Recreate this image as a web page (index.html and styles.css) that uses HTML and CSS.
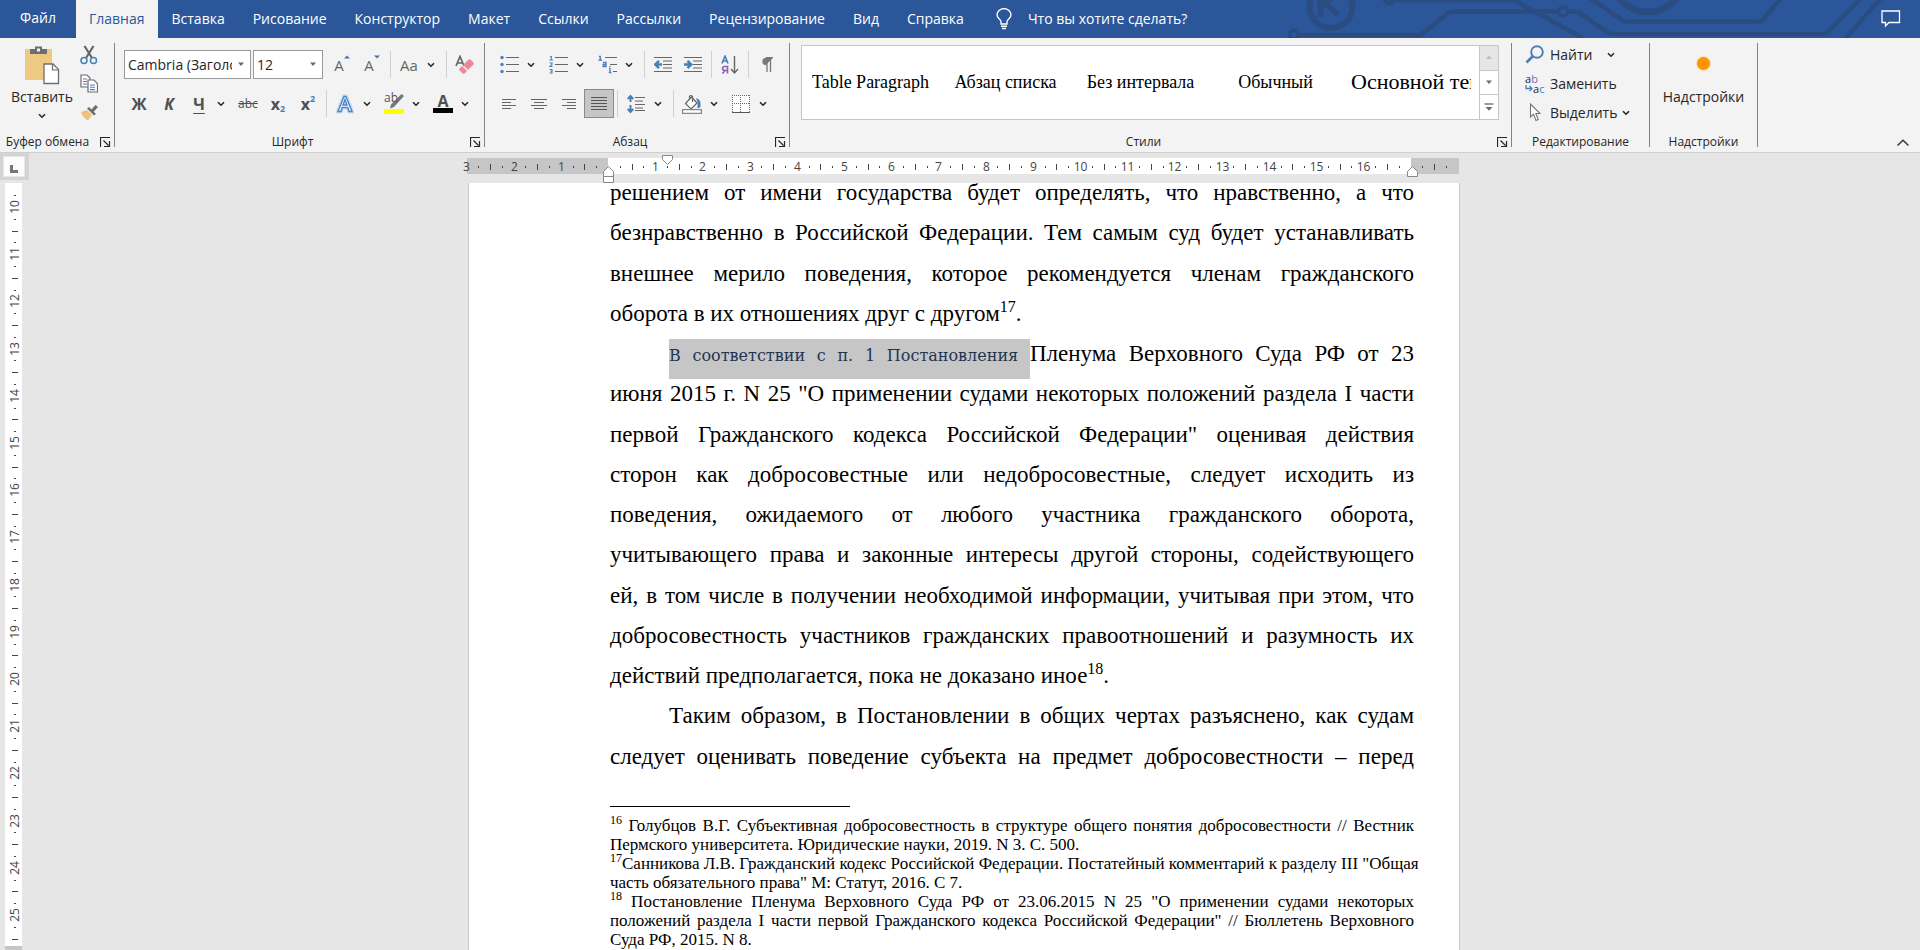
FILE: index.html
```html
<!DOCTYPE html>
<html lang="ru">
<head>
<meta charset="utf-8">
<title>Документ</title>
<link rel="stylesheet" href="styles.css">
</head>
<body>
<svg class="defs" width="0" height="0" aria-hidden="true">
  <symbol id="chev" viewBox="0 0 8 6"><path d="M1 1.2l3 3 3-3" fill="none" stroke="#262626" stroke-width="1.6"/></symbol>
  <symbol id="tri" viewBox="0 0 8 5"><path d="M1 .5h6L4 4z" fill="#6a6a6a"/></symbol>
  <symbol id="launch" viewBox="0 0 11 11"><path d="M.5 10V.5H10M3.5 3.5l5 5M9.5 4v5.5H4" fill="none" stroke="#262626" stroke-width="1.2"/></symbol>
</svg>

<header class="tabs">
  <svg class="circuit" viewBox="1280 0 640 38" width="640" height="38" fill="none" stroke="#2a4c80" stroke-width="4.5" aria-hidden="true">
    <circle cx="1331" cy="6.500" r="21.500" stroke-width="6"/>
    <path d="M1320.500 0v17M1324 2l14 13M1318 0h14" stroke-width="6"/>
    <circle cx="1294" cy="34.500" r="4.500" stroke-width="4"/>
    <path d="M1299 35h122l27-22q3-1.500 6-1.500h103M1569 11.500h6q4 .5 7 3l24 17q3 2.500 6 2.500h212l3-1L1861-2"/>
    <circle cx="1563" cy="11.500" r="4.500" stroke-width="3.500"/>
    <circle cx="1389" cy="-.5" r="4"/>
    <path d="M1394 0h118q4 .5 7 3l64 35M1590-2l32 22q2 1.500 5 1.500h132l4-1.500 18-22M1845 39l36-41"/>
    <circle cx="1648" cy="-24.500" r="36.500" stroke-width="7"/>
  </svg>
  <nav class="tab-list">
    <button class="tab file">Файл</button>
    <button class="tab active">Главная</button>
    <button class="tab">Вставка</button>
    <button class="tab">Рисование</button>
    <button class="tab">Конструктор</button>
    <button class="tab">Макет</button>
    <button class="tab">Ссылки</button>
    <button class="tab">Рассылки</button>
    <button class="tab">Рецензирование</button>
    <button class="tab">Вид</button>
    <button class="tab">Справка</button>
  </nav>
  <button class="tell-me">
    <svg width="16" height="22" viewBox="0 0 16 22" fill="none" stroke="#fff" stroke-width="1.400"><path d="M5 16v-2.500C5 11.500 1 10.500 1 6.800a6.800 6 0 0 1 14 0c0 3.700-4 4.700-4 6.700V16zM5 18.300h6M6 20.500h4"/></svg>
    <span>Что вы хотите сделать?</span>
  </button>
  <button class="comment" aria-label="Примечания">
    <svg width="20" height="18" viewBox="0 0 20 18" fill="none" stroke="#fff" stroke-width="1.300"><path d="M1 1h17.500v11.500H8L4.500 16v-3.500H1z"/></svg>
  </button>
</header>

<section class="ribbon">
  <div class="group g-clip">
    <div class="clip-body">
      <button class="paste">
        <svg width="36" height="40" viewBox="0 0 36 40"><path d="M1 4h27v31H1z" fill="#eec983"/><path d="M6 9V4h5V1.500h7V4h5v5z" fill="#6d6d6d"/><path d="M13 3.500h3v3h-3z" fill="#f3f3f3"/><path d="M20 19h9l5.500 5.500V38.500H20z" fill="#fff" stroke="#6d6d6d" stroke-width="1.300"/><path d="M28.500 19v6h6" fill="none" stroke="#6d6d6d" stroke-width="1.200"/></svg>
        <span>Вставить</span>
        <svg width="8" height="6"><use href="#chev"/></svg>
      </button>
      <div class="clip-side">
        <button class="ico" aria-label="Вырезать"><svg width="18" height="20" viewBox="0 0 18 20" fill="none"><path d="M4.500 1l7.500 12M13.500 1L6 13" stroke="#666" stroke-width="2.200"/><circle cx="4" cy="15.500" r="3" stroke="#4a7ebb" stroke-width="1.500"/><circle cx="13.500" cy="15.500" r="3" stroke="#4a7ebb" stroke-width="1.500"/></svg></button>
        <button class="ico" aria-label="Копировать"><svg width="18" height="19" viewBox="0 0 18 19"><g fill="#fff" stroke="#6d6d6d" stroke-width="1.200"><path d="M1 1h6l3 3v9H1z"/><path d="M8 6h6l3.500 3.500V18H8z"/></g><path d="M3 5h4M3 7.500h4M3 10h4M10 11h5M10 13.300h5M10 15.600h5" stroke="#4a7ebb" stroke-width="1.100"/></svg></button>
        <button class="ico" aria-label="Формат по образцу"><svg width="18" height="17" viewBox="0 0 18 17"><path d="M1 8l6-2 5 5-4 5.500q-2-1-2.500-2-1 .5-1.500-1.500-2-1-3-5z" fill="#eec27a"/><path d="M7 4.500l2-1.500 7 7-2 1.500z" fill="#6d6d6d"/><path d="M11 6l4.500-5L18 3l-4.500 5z" fill="#6d6d6d"/></svg></button>
      </div>
    </div>
    <div class="caption"><span>Буфер обмена</span><button class="launch" aria-label="Буфер обмена: параметры"><svg width="11" height="11"><use href="#launch"/></svg></button></div>
  </div>

  <div class="group g-font">
    <div class="rows">
      <div class="row">
        <div class="combo font-name"><input type="text" aria-label="Шрифт" value="Cambria (Заголовки)"><svg width="8" height="5"><use href="#tri"/></svg></div>
        <div class="combo font-size"><input type="text" aria-label="Размер шрифта" value="12"><svg width="8" height="5"><use href="#tri"/></svg></div>
        <button class="btn glyph up">A<svg width="6" height="4" viewBox="0 0 6 4"><path d="M0 3.500L3 .5l3 3z" fill="#4472b0"/></svg></button>
        <button class="btn glyph up">A<svg width="6" height="4" viewBox="0 0 6 4"><path d="M0 .5h6l-3 3z" fill="#4472b0"/></svg></button>
        <i class="sep"></i>
        <div class="split"><button class="btn glyph">Aa</button><button class="chev" aria-label="Регистр"><svg width="8" height="6"><use href="#chev"/></svg></button></div>
        <i class="sep"></i>
        <button class="btn" aria-label="Удалить форматирование"><svg width="20" height="20" viewBox="0 0 20 20"><path d="M1 11L5 1.500 9 11M2.500 8h5" fill="none" stroke="#666" stroke-width="1.700"/><path d="M13.500 4.500q1-.6 2 0l3 3q.6 1 0 2L13 15 8 10z" fill="#e88a9a"/><path d="M7 11l5 5-2.500 2.500q-1 .6-2 0l-3-3q-.6-1 0-2z" fill="#e88a9a"/></svg></button>
      </div>
      <div class="row">
        <button class="btn glyph b">Ж</button>
        <button class="btn glyph b it">К</button>
        <div class="split"><button class="btn glyph b un">Ч</button><button class="chev" aria-label="Подчёркивание"><svg width="8" height="6"><use href="#chev"/></svg></button></div>
        <button class="btn glyph st">abc</button>
        <button class="btn glyph b">x<sub>2</sub></button>
        <button class="btn glyph b">x<sup>2</sup></button>
        <i class="sep"></i>
        <div class="split"><button class="btn" aria-label="Текстовые эффекты"><svg width="18" height="20" viewBox="0 0 18 20"><path d="M2 17.500L8 2.500h2l6 15h-3L11.800 13.500H6.200L5 17.500zM7 11h4L9 5.500z" fill="#fff" stroke="#c3dcf3" stroke-width="4"/><path d="M2 17.500L8 2.500h2l6 15h-3L11.800 13.500H6.200L5 17.500zM7 11h4L9 5.500z" fill="#fff" stroke="#4a84c9" stroke-width="1.400"/></svg></button><button class="chev" aria-label="Эффекты"><svg width="8" height="6"><use href="#chev"/></svg></button></div>
        <div class="split"><button class="btn mark"><span>ab</span><svg width="20" height="20" viewBox="0 0 20 20"><path d="M17.500 0L20 2l-10 11-4 1.500 1-4z" fill="#777"/><path d="M0 15h20v5H0z" fill="#ff0"/></svg></button><button class="chev" aria-label="Цвет выделения"><svg width="8" height="6"><use href="#chev"/></svg></button></div>
        <div class="split"><button class="btn glyph b color">A</button><button class="chev" aria-label="Цвет текста"><svg width="8" height="6"><use href="#chev"/></svg></button></div>
      </div>
    </div>
    <div class="caption"><span>Шрифт</span><button class="launch" aria-label="Шрифт: параметры"><svg width="11" height="11"><use href="#launch"/></svg></button></div>
  </div>

  <div class="group g-para">
    <div class="rows">
      <div class="row">
        <div class="split"><button class="btn" aria-label="Маркеры"><svg width="19" height="19" viewBox="0 0 19 19"><g fill="#4a7ebb"><circle cx="2" cy="2.500" r="1.700"/><circle cx="2" cy="9.500" r="1.700"/><circle cx="2" cy="16.500" r="1.700"/></g><path d="M6 2.500h13M6 9.500h13M6 16.500h13" stroke="#666"/></svg></button><button class="chev" aria-label="Маркеры: список"><svg width="8" height="6"><use href="#chev"/></svg></button></div>
        <div class="split"><button class="btn" aria-label="Нумерация"><svg width="19" height="19" viewBox="0 0 19 19"><path d="M1 1.500h1.300v3.500M.5 5h3.500M.5 8h2.500v1.500L.8 11.500H3.500M.5 14.500H3V18H.5M1.500 16.200H3" fill="none" stroke="#4a7ebb" stroke-width="1.100"/><path d="M6 2.500h13M6 9.500h13M6 16.500h13" stroke="#666"/></svg></button><button class="chev" aria-label="Нумерация: список"><svg width="8" height="6"><use href="#chev"/></svg></button></div>
        <div class="split"><button class="btn" aria-label="Многоуровневый список"><svg width="19" height="19" viewBox="0 0 19 19"><path d="M1 1.500h1.300V5M.5 5h3.500M5 7.500h3v4H5.200v-2H8M12 11v1m0 1.500h-1M12 13v4.500m-1.200 0h2.600" fill="none" stroke="#4a7ebb" stroke-width="1.300"/><path d="M7 2.500h12M12 9.500h7M15 16.500h4" stroke="#666"/></svg></button><button class="chev" aria-label="Многоуровневый список: варианты"><svg width="8" height="6"><use href="#chev"/></svg></button></div>
        <i class="sep"></i>
        <button class="btn" aria-label="Уменьшить отступ"><svg width="18" height="17" viewBox="0 0 18 17"><path d="M0 1.500h18M9 5h9M9 8.500h9M9 12h9M0 15.500h18" stroke="#666"/><path d="M8 8.500H2M5 4.800L1.300 8.500 5 12.200" fill="none" stroke="#4a7ebb" stroke-width="2.600"/></svg></button>
        <button class="btn" aria-label="Увеличить отступ"><svg width="18" height="17" viewBox="0 0 18 17"><path d="M0 1.500h18M9 5h9M9 8.500h9M9 12h9M0 15.500h18" stroke="#666"/><path d="M0 8.500h6M3.500 4.800l3.700 3.700-3.700 3.700" fill="none" stroke="#4a7ebb" stroke-width="2.600"/></svg></button>
        <i class="sep"></i>
        <button class="btn" aria-label="Сортировка"><svg width="18" height="20" viewBox="0 0 18 20" fill="none"><path d="M1 8.500L4 1l3 7.500M2 6h4" stroke="#4a7ebb" stroke-width="1.600"/><path d="M6.500 18.500v-7H4q-2.500.2-2.500 2t2.500 2h2.500M4 15.500l-2.500 3" stroke="#8f5fb3" stroke-width="1.600"/><path d="M13.500 1v16.500M10 14l3.500 4 3.500-4" stroke="#666" stroke-width="1.400"/></svg></button>
        <i class="sep"></i>
        <button class="btn" aria-label="Знаки абзаца"><svg width="12" height="15" viewBox="0 0 12 15"><path d="M12 .7H4.500a3.800 3.800 0 0 0 0 7.500" fill="#777"/><path d="M12 .7H5M6 1v14M9.500 1v14" stroke="#777" stroke-width="1.300" fill="none"/></svg></button>
      </div>
      <div class="row">
        <button class="btn" aria-label="По левому краю"><svg width="16" height="14" viewBox="0 0 16 14"><path d="M1 2.500h14M1 5.500h9M1 8.500h14M1 11.500h9" stroke="#666"/></svg></button>
        <button class="btn" aria-label="По центру"><svg width="16" height="14" viewBox="0 0 16 14"><path d="M0 2.500h16M3 5.500h10M0 8.500h16M3 11.500h10" stroke="#666"/></svg></button>
        <button class="btn" aria-label="По правому краю"><svg width="16" height="14" viewBox="0 0 16 14"><path d="M1 2.500h14M6 5.500h9M1 8.500h14M6 11.500h9" stroke="#666"/></svg></button>
        <button class="btn on" aria-label="По ширине"><svg width="16" height="14" viewBox="0 0 16 14"><path d="M0 .5h16M0 3.500h16M0 6.500h16M0 9.500h16M0 12.500h16" stroke="#555"/></svg></button>
        <i class="sep"></i>
        <div class="split"><button class="btn" aria-label="Интервал"><svg width="18" height="20" viewBox="0 0 18 20"><path d="M3.500 2v6M3.500 11v7M.8 5L3.500 2l2.700 3M.8 15l2.700 3 2.700-3" fill="none" stroke="#4a7ebb" stroke-width="2"/><path d="M8 3.500h10M8 7h8M8 10.500h10M8 14h8M8 16.500h10" stroke="#666"/></svg></button><button class="chev" aria-label="Интервал: варианты"><svg width="8" height="6"><use href="#chev"/></svg></button></div>
        <i class="sep"></i>
        <div class="split"><button class="btn" aria-label="Заливка"><svg width="20" height="20" viewBox="0 0 20 20"><path d="M9.500 3L15 9l-6 6L3.500 9.500z" fill="#fff" stroke="#666" stroke-width="1.200"/><path d="M7.500 6V2.500q1-2 3 0V8" fill="none" stroke="#666" stroke-width="1.200"/><path d="M14 4q4 1 4.500 5v4l-3 1.500V8z" fill="#4a7ebb"/><path d="M.6 15.600h18.800v3.800H.6z" fill="#fff" stroke="#888" stroke-width="1.200"/></svg></button><button class="chev" aria-label="Заливка: цвет"><svg width="8" height="6"><use href="#chev"/></svg></button></div>
        <div class="split"><button class="btn" aria-label="Границы"><svg width="18" height="18" viewBox="0 0 18 18"><path d="M.5.5h17v17H.5z" fill="#fff"/><path d="M0 .5h18M.5 0v17M17.500 0v17M8.500 0v17M0 8.500h18" stroke="#666" stroke-dasharray="1 1"/><path d="M0 17.500h18" stroke="#555"/></svg></button><button class="chev" aria-label="Границы: варианты"><svg width="8" height="6"><use href="#chev"/></svg></button></div>
      </div>
    </div>
    <div class="caption"><span>Абзац</span><button class="launch" aria-label="Абзац: параметры"><svg width="11" height="11"><use href="#launch"/></svg></button></div>
  </div>

  <div class="group g-styles">
    <div class="gallery">
      <div class="styles-list">
        <button class="style">Table Paragraph</button>
        <button class="style">Абзац списка</button>
        <button class="style">Без интервала</button>
        <button class="style">Обычный</button>
        <button class="style big">Основной текст</button>
      </div>
      <div class="scroll">
        <button disabled aria-label="Вверх"><svg width="8" height="5" viewBox="0 0 8 5"><path d="M1 4h6L4 .8z" fill="#bbb"/></svg></button>
        <button aria-label="Вниз"><svg width="8" height="5"><use href="#tri"/></svg></button>
        <button aria-label="Ещё"><svg width="10" height="9" viewBox="0 0 10 9"><path d="M.5 1h9" stroke="#666" stroke-width="1.300"/><path d="M1.500 4h7L5 7.800z" fill="#6a6a6a"/></svg></button>
      </div>
    </div>
    <div class="caption"><span>Стили</span><button class="launch" aria-label="Стили: параметры"><svg width="11" height="11"><use href="#launch"/></svg></button></div>
  </div>

  <div class="group g-edit">
    <div class="edit-body">
      <button class="cmd"><svg width="20" height="19" viewBox="0 0 20 19" fill="none" stroke="#4a7ebb"><circle cx="12" cy="7" r="5.800" stroke-width="1.900"/><path d="M8 11l-6.500 6.500" stroke-width="2.600"/></svg><span>Найти</span><svg class="far" width="8" height="6"><use href="#chev"/></svg></button>
      <button class="cmd"><span class="rep"><span class="ab">a<b>b</b></span><span class="ac"><svg width="8" height="7" viewBox="0 0 8 7"><path d="M1 0v3.500h6M4.500 1L7 3.500 4.500 6" fill="none" stroke="#4a7ebb" stroke-width="1.300"/></svg>a<b>c</b></span></span><span>Заменить</span></button>
      <button class="cmd"><svg width="20" height="19" viewBox="0 0 20 19"><path d="M5.500 1v13l3-2.700 2.500 6.200 2.300-1-2.500-6H15z" fill="#fff" stroke="#777" stroke-width="1.100"/></svg><span>Выделить</span><svg width="8" height="6"><use href="#chev"/></svg></button>
    </div>
    <div class="caption"><span>Редактирование</span></div>
  </div>

  <div class="group g-addins">
    <button class="addins"><i class="dot"></i><span>Надстройки</span></button>
    <div class="caption"><span>Надстройки</span></div>
  </div>

  <div class="ribbon-end">
    <button class="collapse" aria-label="Свернуть ленту"><svg width="14" height="8" viewBox="0 0 14 8"><path d="M1.500 6.500L7 1.300l5.500 5.200" fill="none" stroke="#333" stroke-width="1.400"/></svg></button>
  </div>
</section>

<main class="workspace">
  <aside class="v-side">
    <div class="corner"><button aria-label="Тип табуляции"><svg width="8" height="8" viewBox="0 0 8 8"><path d="M0 0h3v5h5v3H0z" fill="#777"/></svg></button></div>
    <div class="v-ruler"><svg id="vr" width="17" height="767"></svg></div>
  </aside>
  <div class="doc-col">
    <div class="h-ruler"><svg id="hr" width="1002" height="30"></svg></div>
    <article class="page">
      <div class="text">
        <p><span class="l">решением от имени государства будет определять, что нравственно, а что</span>
        <span class="l">безнравственно в Российской Федерации. Тем самым суд будет устанавливать</span>
        <span class="l">внешнее мерило поведения, которое рекомендуется членам гражданского</span>
        <span class="l end">оборота в их отношениях друг с другом<sup>17</sup>.</span></p>
        <p><span class="l first"><mark>В соответствии с п. 1 Постановления </mark>Пленума Верховного Суда РФ от 23</span>
        <span class="l">июня 2015 г. N 25 "О применении судами некоторых положений раздела I части</span>
        <span class="l">первой Гражданского кодекса Российской Федерации" оценивая действия</span>
        <span class="l">сторон как добросовестные или недобросовестные, следует исходить из</span>
        <span class="l">поведения, ожидаемого от любого участника гражданского оборота,</span>
        <span class="l">учитывающего права и законные интересы другой стороны, содействующего</span>
        <span class="l">ей, в том числе в получении необходимой информации, учитывая при этом, что</span>
        <span class="l">добросовестность участников гражданских правоотношений и разумность их</span>
        <span class="l end">действий предполагается, пока не доказано иное<sup>18</sup>.</span></p>
        <p><span class="l first">Таким образом, в Постановлении в общих чертах разъяснено, как судам</span>
        <span class="l">следует оценивать поведение субъекта на предмет добросовестности – перед</span></p>
      </div>
      <hr>
      <div class="notes">
        <p><span class="l"><sup>16</sup> Голубцов В.Г. Субъективная добросовестность в структуре общего понятия добросовестности // Вестник</span>
        <span class="l end">Пермского университета. Юридические науки, 2019. N 3. С. 500.</span></p>
        <p><span class="l end"><sup>17</sup>Санникова Л.В. Гражданский кодекс Российской Федерации. Постатейный комментарий к разделу III "Общая</span>
        <span class="l end">часть обязательного права" М: Статут, 2016. С 7.</span></p>
        <p><span class="l"><sup>18</sup> Постановление Пленума Верховного Суда РФ от 23.06.2015 N 25 "О применении судами некоторых</span>
        <span class="l">положений раздела I части первой Гражданского кодекса Российской Федерации" // Бюллетень Верховного</span>
        <span class="l end">Суда РФ, 2015. N 8.</span></p>
      </div>
    </article>
  </div>
</main>
<script src="script.js"></script>
</body>
</html>
```
FILE: styles.css
```css
* { box-sizing: border-box; }
body {
  margin: 0;
  height: 100vh;
  display: flex;
  flex-direction: column;
  overflow: hidden;
  background: #e6e6e6;
  color: #262626;
  font: 14px/20px "Open Sans", "Noto Sans", sans-serif;
}
button {
  border: 0;
  padding: 0;
  background: none;
  color: inherit;
  font: inherit;
}
svg { display: block; flex: none; }
.defs { position: absolute; }

/* Tabs */
.tabs {
  position: relative;
  display: flex;
  flex: none;
  height: 38px;
  background: #2b579a;
  color: #fff;
}
.circuit { position: absolute; right: 0; top: 0; }
.tab-list { display: flex; }
.tab { padding: 0 14px; white-space: nowrap; }
.tab.file { width: 76px; padding-bottom: 2px; }
.tab.active { padding: 0 13px; background: #f3f3f3; color: #2b579a; }
.tell-me {
  display: flex;
  align-items: center;
  gap: 16px;
  margin-left: 18px;
  padding-bottom: 1px;
  white-space: nowrap;
}
.comment { position: relative; margin: 0 19px 0 auto; }

/* Ribbon */
.ribbon {
  display: flex;
  flex: none;
  height: 115px;
  padding: 5px 0;
  background: #f3f3f3;
  border-bottom: 1px solid #d0d0d0;
}
.group {
  display: flex;
  flex-direction: column;
  justify-content: space-between;
  flex: none;
  border-right: 1px solid #828282;
}
.g-clip { width: 115px; }
.g-font { width: 370px; }
.g-para { width: 305px; }
.g-styles { flex: 1; min-width: 0; }
.g-edit { width: 138px; }
.g-addins { width: 108px; }
.ribbon-end { display: flex; align-items: flex-end; justify-content: flex-end; width: 162px; padding-right: 10px; }
.caption { display: flex; align-items: center; height: 10px; font-size: 12px; line-height: 14px; }
.caption span { flex: 1; text-align: center; white-space: nowrap; }
.launch { width: 11px; margin-right: 3px; }

.clip-body { display: flex; padding: 2px 0 0 4px; }
.paste { display: flex; flex-direction: column; align-items: center; width: 76px; }
.paste span { margin: 2px 0 6px; }
.clip-side { display: flex; flex-direction: column; margin-top: -5px; }
.ico { display: flex; align-items: center; justify-content: center; width: 18px; height: 29px; }
.g-clip .caption span { padding-right: 5px; }

.rows { display: flex; flex-direction: column; gap: 10px; padding: 7px 0 0 9px; }
.row { display: flex; align-items: center; height: 29px; }
.split { display: flex; margin-right: 5px; }
.btn { display: flex; align-items: center; justify-content: center; position: relative; width: 30px; height: 29px; flex: none; }
.btn.on { background: #c6c6c6; border: 1px solid #8a8a8a; }
.chev { display: flex; align-items: center; justify-content: center; width: 14px; height: 29px; }
.sep { width: 1px; height: 27px; margin: 0 3px; background: #d0d0d0; flex: none; }
.combo {
  display: flex;
  align-items: center;
  height: 29px;
  margin-right: 2px;
  padding: 0 5px 0 3px;
  background: #fff;
  border: 1px solid #999;
}
.combo input { flex: 1; min-width: 0; margin-right: 5px; padding: 0; border: 0; background: none; color: #262626; font: inherit; outline: 0; }
.font-name { width: 127px; }
.font-size { width: 70px; margin-right: 4px; }
.glyph { color: #666; font-size: 15px; }
.glyph.b { color: #505050; font-weight: 700; font-size: 16px; }
.it { font-style: italic; }
.un { text-decoration: underline; text-underline-offset: 3px; }
.glyph.st { font-size: 12px; color: #505050; text-decoration: line-through; }
.glyph sub, .glyph sup { color: #4a7ebb; font-size: 9px; line-height: 9px; }
.glyph sub { align-self: flex-end; margin-bottom: 5px; }
.glyph sup { align-self: flex-start; margin-top: 5px; }
.up svg { align-self: flex-start; margin-top: 5px; }
.mark span { position: absolute; left: 5px; top: -1px; font-size: 12px; color: #555; }
.color::after { content: ""; position: absolute; left: 5px; right: 5px; bottom: 5px; height: 5px; background: #000; }
.color { padding-bottom: 6px; }

/* Style gallery */
.gallery {
  display: flex;
  height: 75px;
  margin: 2px 12px 0 11px;
  background: #fff;
  border: 1px solid #c6c6c6;
}
.styles-list { display: flex; flex: 1; min-width: 0; margin: 0 8px 0 1px; overflow: hidden; }
.style { flex: none; width: 135px; padding-bottom: 1px; color: #000; font: 18px/24px "Liberation Serif", serif; white-space: nowrap; }
.style.big { width: auto; padding-left: 8px; font-size: 22px; }
.scroll { display: flex; flex-direction: column; width: 19px; border-left: 1px solid #c6c6c6; }
.scroll button { display: flex; flex: 1; align-items: center; justify-content: center; }
.scroll button + button { border-top: 1px solid #c6c6c6; }
.scroll button:disabled { background: #e6e6e6; }

.edit-body { display: flex; flex-direction: column; padding-left: 13px; margin-top: -3px; }
.cmd { display: flex; align-items: center; gap: 5px; height: 29px; white-space: nowrap; }
.far { margin-left: 9px; }
.rep { display: flex; flex-direction: column; width: 20px; font-size: 11px; line-height: 10px; text-align: left; }
.rep b { font-weight: 400; }
.ab b { color: #8f5fb3; }
.ac { display: flex; align-items: center; }
.ac b { color: #4a7ebb; }
.addins { display: flex; flex-direction: column; align-items: center; gap: 17px; padding-top: 14px; }
.dot { width: 13px; height: 13px; border-radius: 50%; background: #ff9500; box-shadow: 0 0 2px #ffb850; }

/* Workspace */
.workspace { display: flex; flex: 1; min-height: 0; }
.v-side { display: flex; flex-direction: column; width: 29px; flex: none; }
.corner { height: 27px; padding: 3px; background: #d4d4d4; }
.corner button { display: flex; align-items: center; justify-content: center; width: 22px; height: 21px; padding: 4px 0 0; background: #fcfcfc; border: 1px solid #e8e8e8; }
.v-ruler { flex: 1; margin: 3px 0 0 5px; overflow: hidden; }
.doc-col { display: flex; flex: 1; flex-direction: column; align-items: center; margin-right: 21px; min-width: 0; }
.h-ruler { flex: none; }
.page {
  width: 992px;
  flex: 1;
  min-height: 0;
  overflow: hidden;
  padding: 0 45px 0 141px;
  background: #fff;
  border: solid #c6c6c6;
  border-width: 0 1px;
  color: #000;
  font-family: "Liberation Serif", "Times New Roman", serif;
}
p { margin: 0; }
.text { margin-top: -10px; font-size: 23px; line-height: 1.75; }
.l { display: block; white-space: nowrap; text-align: justify; text-align-last: justify; }
.l.end { text-align-last: left; }
.l.first { padding-left: 59px; }
.page sup { font-size: 16px; line-height: 0; }
mark { padding: 7px 0 14px; background: #c6c6c6; color: #1f3450; font: 16px/24px "DejaVu Serif", serif; }
hr { width: 240px; height: 1px; margin: 29px 0 9px; border: 0; background: #000; }
.notes { font-size: 17px; line-height: 19px; }
.page .notes sup { font-size: 12px; }

/* Rulers */
.tick { stroke: #444; stroke-width: 1; }
.num { fill: #444; font: 12px "Open Sans", sans-serif; text-anchor: middle; }
```
FILE: script.js
```js
// Draws the centimetre scales of both rulers.
const NS = 'http://www.w3.org/2000/svg';
const CM = 47.2;

function add(svg, name, attrs, text) {
  const node = document.createElementNS(NS, name);
  for (const key in attrs) node.setAttribute(key, attrs[key]);
  if (text !== undefined) node.textContent = text;
  svg.appendChild(node);
}

function horizontal() {
  const svg = document.getElementById('hr');
  const zero = 145;
  add(svg, 'rect', { x: 4, y: 5, width: 992, height: 16, fill: '#c6c6c6' });
  add(svg, 'rect', { x: zero, y: 5, width: 803, height: 16, fill: '#fff' });
  for (let q = -12; q <= 71; q++) {
    const x = Math.round(zero + q * CM / 4) + 0.5;
    if (q % 4 === 0) {
      if (q !== 0 && q !== 68) add(svg, 'text', { x: x, y: 18, class: 'num' }, Math.abs(q / 4));
    } else if (q % 2 === 0) {
      add(svg, 'path', { d: `M${x} 11v6`, class: 'tick' });
    } else {
      add(svg, 'path', { d: `M${x} 13v2`, class: 'tick' });
    }
  }
  const marker = { fill: '#fff', stroke: '#888' };
  add(svg, 'path', { d: 'M199.500 2.500h10v4l-5 5-5-5z', ...marker });
  add(svg, 'path', { d: 'M140.500 23.500v-5l5-5 5 5v5zM140.500 23.500h10v6h-10z', ...marker });
  add(svg, 'path', { d: 'M944.500 23.500v-5l5-5 5 5v5z', ...marker });
}

function vertical() {
  const svg = document.getElementById('vr');
  add(svg, 'rect', { x: 0, y: 0, width: 17, height: 763, fill: '#fff' });
  add(svg, 'rect', { x: 0, y: 763, width: 17, height: 4, fill: '#c6c6c6' });
  for (let q = -1; q <= 62; q++) {
    const y = Math.round(24 + q * CM / 4) + 0.5;
    if (q % 4 === 0) {
      add(svg, 'text', { x: 0, y: 0, transform: `translate(14 ${y - 0.5}) rotate(-90)`, class: 'num' }, 10 + q / 4);
    } else if (q % 2 === 0) {
      add(svg, 'path', { d: `M7 ${y}h6`, class: 'tick' });
    } else {
      add(svg, 'path', { d: `M9 ${y}h2`, class: 'tick' });
    }
  }
}

horizontal();
vertical();
```
